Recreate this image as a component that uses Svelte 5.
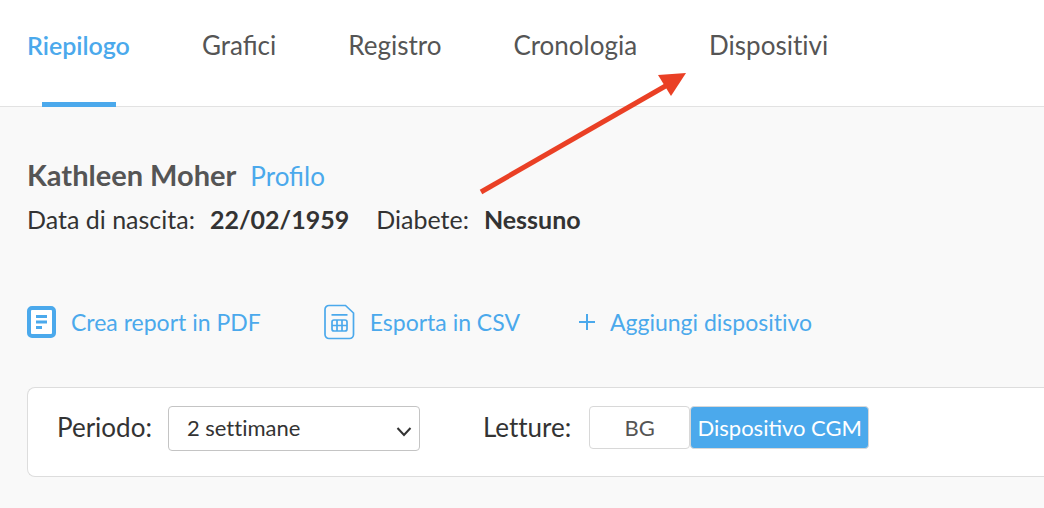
<script lang="ts">
	const tabs = ['Riepilogo', 'Grafici', 'Registro', 'Cronologia', 'Dispositivi'];

	let activeTab = $state('Riepilogo');
	let reading = $state('cgm');
	let period = $state('2');
</script>

<div class="page">
	<nav class="tabs">
		{#each tabs as tab}
			<a
				href="#{tab.toLowerCase()}"
				class="tab"
				class:active={tab === activeTab}
				aria-current={tab === activeTab ? 'page' : undefined}
				onclick={() => (activeTab = tab)}
			>{tab}</a>
		{/each}
	</nav>

	<svg class="arrow" width="212" height="126" viewBox="0 0 212 126" aria-hidden="true">
		<path d="M3 122 L191 14" stroke="#ea4025" stroke-width="5" />
		<path d="M208 3 L180 5 L193 26 Z" fill="#ea4025" />
	</svg>

	<main>
		<header class="patient">
			<h1>Kathleen Moher</h1>
			<a href="#profilo">Profilo</a>
		</header>
		<dl class="details">
			<dt>Data di nascita:</dt>
			<dd>22/02/1959</dd>
			<dt>Diabete:</dt>
			<dd>Nessuno</dd>
		</dl>

		<div class="actions">
			<button type="button" class="action">
				<svg width="29" height="32" viewBox="0 0 29 32" fill="none" stroke="currentColor" aria-hidden="true">
					<rect x="2" y="2" width="25" height="28" rx="3" fill="#fff" stroke-width="4" />
					<path d="M9 10.5h11M9 16h11M9 21.5h6" stroke-width="2.8" />
				</svg>
				Crea report in PDF
			</button>
			<button type="button" class="action">
				<svg width="31" height="36" viewBox="0 0 31 36" fill="none" stroke="currentColor" stroke-width="1.7" aria-hidden="true">
					<path d="M5 1.500h16.500l8 7.500v21.500a4 4 0 0 1-4 4H5a4 4 0 0 1-4-4v-25a4 4 0 0 1 4-4z" />
					<rect x="8" y="16" width="15" height="11" rx="2" />
					<path d="M8 21.500h15M13 16v11M18 16v11M7.500 10.800h16" />
				</svg>
				Esporta in CSV
			</button>
			<button type="button" class="action">
				<svg width="16" height="16" viewBox="0 0 16 16" stroke="currentColor" stroke-width="2" aria-hidden="true">
					<path d="M8 0v16M0 8h16" />
				</svg>
				Aggiungi dispositivo
			</button>
		</div>

		<section class="filters">
			<label for="period">Periodo:</label>
			<div class="select">
				<select id="period" bind:value={period}>
					<option value="1">1 settimana</option>
					<option value="2">2 settimane</option>
					<option value="4">4 settimane</option>
				</select>
				<svg width="16" height="10" viewBox="0 0 16 10" fill="none" stroke="#333" stroke-width="2" aria-hidden="true">
					<path d="M1.500 1l6.500 7 6.500-7" />
				</svg>
			</div>
			<span class="readings" id="readings">Letture:</span>
			<div class="toggle" role="group" aria-labelledby="readings">
				<button type="button" class="bg" class:selected={reading === 'bg'} aria-pressed={reading === 'bg'} onclick={() => (reading = 'bg')}>BG</button>
				<button type="button" class:selected={reading === 'cgm'} aria-pressed={reading === 'cgm'} onclick={() => (reading = 'cgm')}>Dispositivo CGM</button>
			</div>
		</section>
	</main>
</div>

<style>
	:global(body) {
		margin: 0;
		background: #f9f9f9;
		overflow-x: hidden;
	}

	.page {
		position: relative;
		font-family: Lato, sans-serif;
		font-size: 25px;
		line-height: 30px;
		color: #333;
		white-space: nowrap;
	}

	a,
	button,
	select {
		font: inherit;
	}

	a {
		color: #4ba9ec;
		text-decoration: none;
	}

	.tabs {
		display: flex;
		gap: 72px;
		height: 106px;
		padding-left: 27px;
		background: #fff;
		border-bottom: 1px solid #e2e2e2;
	}

	.tab {
		position: relative;
		padding-top: 30px;
		color: #555;
		font-size: 26px;
	}

	.tab:last-child {
		font-variant-ligatures: none;
	}

	.tab.active {
		color: #4ba9ec;
		font-size: 25px;
		font-weight: 600;
	}

	.tab.active::after {
		content: '';
		position: absolute;
		left: 15px;
		right: 14px;
		bottom: -1px;
		height: 5px;
		background: #4ba9ec;
	}

	.arrow {
		position: absolute;
		left: 478px;
		top: 70px;
		pointer-events: none;
	}

	main {
		padding: 53px 0 31px 27px;
	}

	.patient {
		display: flex;
		align-items: baseline;
		gap: 14px;
	}

	.patient a {
		font-size: 26px;
	}

	h1 {
		margin: 0;
		font-size: 29px;
		line-height: 30px;
		color: #555;
	}

	.details {
		display: flex;
		margin: 13px 0 0;
	}

	dt {
		margin-right: 15px;
	}

	dd {
		margin: 0 27px 0 0;
		font-weight: 700;
	}

	.actions {
		display: flex;
		align-items: center;
		gap: 63px;
		height: 36px;
		margin-top: 70px;
	}

	.action {
		display: flex;
		align-items: center;
		gap: 15px;
		padding: 0;
		border: 0;
		background: none;
		color: #4ba9ec;
		font-size: 23px;
		font-variant-ligatures: none;
		cursor: pointer;
	}

	.action:last-child {
		margin-left: -4px;
	}

	.filters {
		display: flex;
		align-items: flex-start;
		height: 52px;
		margin-top: 47px;
		padding: 18px 29px;
		background: #fff;
		border: 1px solid #ddd;
		border-right: 0;
		border-radius: 8px 0 0 8px;
	}

	label,
	.readings {
		padding-top: 6px;
		font-size: 26px;
		font-variant-ligatures: none;
	}

	.select {
		position: relative;
		width: 252px;
		margin: 0 63px 0 16px;
	}

	select {
		appearance: none;
		box-sizing: border-box;
		width: 100%;
		height: 45px;
		padding: 0 18px 2px;
		border: 1px solid #c4c4c4;
		border-radius: 4px;
		background: #fff;
		color: #333;
		font-size: 22px;
		font-variant-ligatures: none;
	}

	.select svg {
		position: absolute;
		right: 8px;
		top: 21px;
		pointer-events: none;
	}

	.toggle {
		display: flex;
		margin-left: 18px;
	}

	.toggle button {
		box-sizing: border-box;
		width: 179px;
		height: 43px;
		padding: 0;
		border: 1px solid #d8d8d8;
		border-radius: 4px;
		background: #fff;
		color: #555;
		font-size: 22px;
		cursor: pointer;
	}

	.toggle .bg {
		width: 101px;
	}

	.toggle .selected {
		background: #4ba9ec;
		color: #fff;
	}
</style>
